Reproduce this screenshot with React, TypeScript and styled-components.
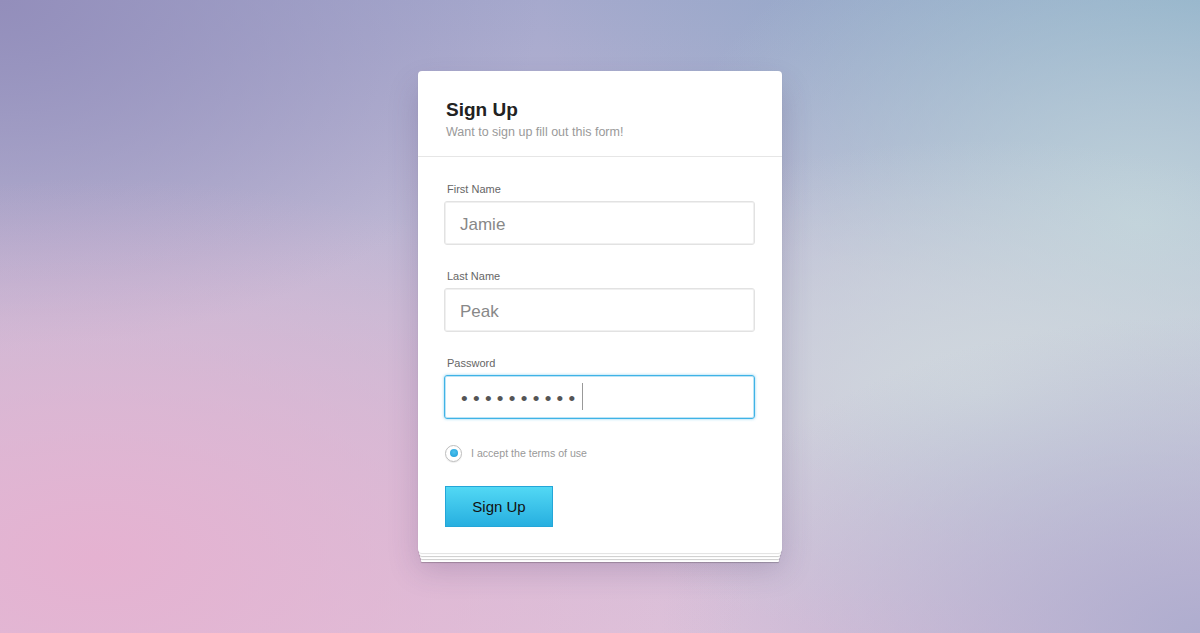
import React from 'react'
import styled, { createGlobalStyle } from 'styled-components'

const GlobalStyle = createGlobalStyle`
  html, body {
    margin: 0;
    padding: 0;
    height: 100%;
  }
  body {
    font-family: "Liberation Sans", Arial, sans-serif;
  }
`

const Page = styled.div`
  min-height: 100vh;
  box-sizing: border-box;
  padding-bottom: 10px;
  display: flex;
  align-items: center;
  justify-content: center;
  background:
    radial-gradient(ellipse 45% 50% at 100% 100%, rgba(172, 172, 206, 0.95) 0%, rgba(172, 172, 206, 0) 100%),
    radial-gradient(ellipse 55% 60% at 8% 88%, rgba(229, 178, 209, 1) 0%, rgba(229, 178, 209, 0) 100%),
    radial-gradient(ellipse 40% 40% at 82% 62%, rgba(208, 216, 222, 1) 0%, rgba(208, 216, 222, 0) 100%),
    radial-gradient(ellipse 40% 55% at 95% 35%, rgba(190, 210, 218, 1) 0%, rgba(190, 210, 218, 0) 100%),
    radial-gradient(ellipse 55% 50% at 100% 0%, rgba(134, 170, 198, 1) 0%, rgba(134, 170, 198, 0) 100%),
    radial-gradient(ellipse 45% 55% at 0% 0%, rgba(147, 142, 187, 1) 0%, rgba(147, 142, 187, 0) 100%),
    linear-gradient(to bottom, #a6a9cd 0%, #c6bcd6 50%, #dcc2da 100%);
`

// the two sheets under the card are drawn as stacked shadows
const Card = styled.div`
  width: 364px;
  background: #fff;
  border-radius: 4px;
  box-shadow:
    0 1px 1px rgba(0, 0, 0, 0.12),
    0 4px 0 -1px #fff,
    0 5px 1px -1px rgba(0, 0, 0, 0.2),
    0 8px 0 -2px #fff,
    0 9px 1px -2px rgba(0, 0, 0, 0.2),
    0 12px 0 -3px #fff,
    0 13px 1px -3px rgba(0, 0, 0, 0.22),
    0 16px 30px rgba(70, 50, 100, 0.22);
`

const Header = styled.div`
  padding: 27px 28px 16px;
  border-bottom: 1px solid #e6e6e6;
`

const Title = styled.h1`
  margin: 0 0 2px;
  font-size: 19px;
  line-height: 24px;
  font-weight: bold;
  color: #222;
`

const Subtitle = styled.p`
  margin: 0;
  font-size: 12.5px;
  line-height: 16px;
  color: #9a9a9a;
`

const Form = styled.form`
  padding: 25px 27px 26px 26px;
  display: flex;
  flex-direction: column;
`

const Field = styled.div`
  display: flex;
  flex-direction: column;
  gap: 5px;
  & + & {
    margin-top: 24px;
  }
`

const Label = styled.label`
  padding-left: 3px;
  font-size: 11px;
  line-height: 14px;
  color: #666;
`

const Input = styled.div<{ $focused?: boolean }>`
  height: 44px;
  box-sizing: border-box;
  display: flex;
  align-items: center;
  padding: 4px 15px 0;
  border-radius: 3px;
  border: 1px solid ${p => (p.$focused ? '#3fb3e6' : '#e2e2e2')};
  box-shadow: ${p =>
    p.$focused
      ? '0 0 3px rgba(63, 179, 230, 0.6), inset 0 0 0 1px rgba(63, 179, 230, 0.35)'
      : 'inset 0 0 0 1px #f0f0f0'};
  font-size: 17px;
  color: #888;
`

const Dots = styled.span`
  font-size: 19px;
  letter-spacing: 5.3px;
  color: #555;
  margin-left: 1px;
`

const Caret = styled.span`
  width: 1px;
  height: 27px;
  background: #999;
  margin-left: 1px;
  margin-top: -4px;
`

const Terms = styled.label`
  margin-top: 26px;
  display: flex;
  align-items: center;
  gap: 9px;
  font-size: 10.6px;
  color: #999;
  padding-left: 1px;
`

const Radio = styled.span`
  width: 17px;
  height: 17px;
  box-sizing: border-box;
  border-radius: 50%;
  border: 1px solid #bdbdbd;
  box-shadow: 0 1px 1px rgba(0, 0, 0, 0.08);
  display: flex;
  align-items: center;
  justify-content: center;
  &::after {
    content: '';
    width: 8px;
    height: 8px;
    border-radius: 50%;
    background: radial-gradient(circle at 50% 40%, #4ec3ef, #1b9ad6);
  }
`

const Button = styled.button`
  margin-top: 24px;
  margin-left: 1px;
  align-self: flex-start;
  width: 108px;
  height: 41px;
  border: 1px solid #24a6d8;
  border-radius: 0;
  background: linear-gradient(to bottom, #52d8f4, #27afe0);
  font-family: "Liberation Sans", Arial, sans-serif;
  font-size: 15px;
  color: #111;
  cursor: pointer;
`

export default function App() {
  return (
    <>
      <GlobalStyle />
      <Page>
        <Card>
          <Header>
            <Title>Sign Up</Title>
            <Subtitle>Want to sign up fill out this form!</Subtitle>
          </Header>
          <Form onSubmit={e => e.preventDefault()}>
            <Field>
              <Label>First Name</Label>
              <Input>Jamie</Input>
            </Field>
            <Field>
              <Label>Last Name</Label>
              <Input>Peak</Input>
            </Field>
            <Field>
              <Label>Password</Label>
              <Input $focused>
                <Dots>••••••••••</Dots>
                <Caret />
              </Input>
            </Field>
            <Terms>
              <Radio />
              I accept the terms of use
            </Terms>
            <Button type="submit">Sign Up</Button>
          </Form>
        </Card>
      </Page>
    </>
  )
}
